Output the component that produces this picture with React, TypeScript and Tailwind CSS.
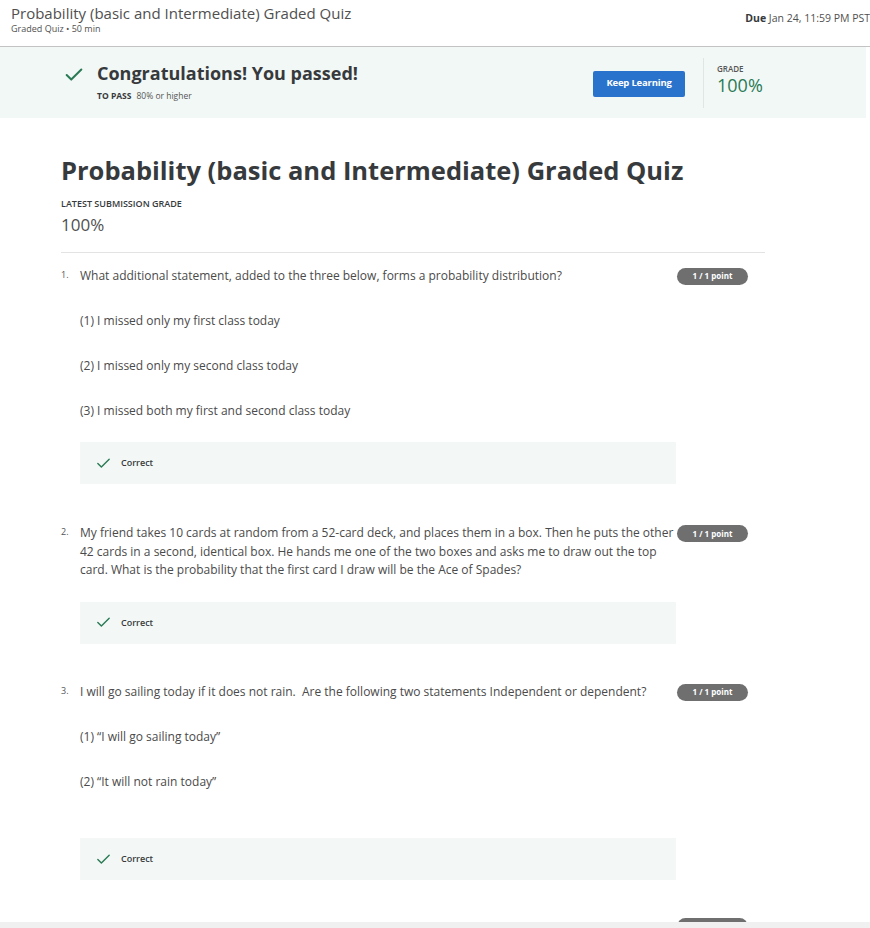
import { Check } from 'lucide-react';

const font = { fontFamily: '"Open Sans", "Liberation Sans", sans-serif' };

function Badge({ label = '1 / 1 point' }: { label?: string }) {
  return (
    <div className="flex h-[17px] w-[71px] shrink-0 items-center justify-center rounded-full bg-[#6f6f6f] text-[8px] font-bold text-white">
      {label}
    </div>
  );
}

function Correct() {
  return (
    <div className="flex h-[42px] w-[596px] items-center gap-[9px] bg-[#f3f8f6] pl-[15px]">
      <Check className="h-[17px] w-[17px] text-[#2a7a55]" strokeWidth={2} />
      <span className="text-[9px] font-semibold text-[#373a3c]">Correct</span>
    </div>
  );
}

function Question({ n, text, children }: { n: number; text: string; children?: React.ReactNode }) {
  return (
    <div className="flex">
      <div className="w-[19px] shrink-0 pt-[1px] text-[9px] text-[#555]">{n}.</div>
      <div className="w-[596px] shrink-0">
        <p className="whitespace-pre-wrap text-[12px] leading-[18.5px] text-[#4a4a4a]">{text}</p>
        {children}
      </div>
      <div className="ml-[1px] pt-[1px]">
        <Badge />
      </div>
    </div>
  );
}

function Option({ label }: { label: string }) {
  return <p className="mt-[26px] text-[12px] leading-[19px] text-[#4a4a4a]">{label}</p>;
}

export default function App() {
  return (
    <div className="relative h-[928px] w-[870px] overflow-hidden bg-white" style={font}>
      <header className="flex h-[47px] justify-between border-b border-[#c3c3c3]">
        <div className="pl-[11px] pt-[3px]">
          <h1 className="text-[15px] leading-[20px] text-[#505050]">Probability (basic and Intermediate) Graded Quiz</h1>
          <p className="text-[9px] leading-[12px] text-[#505050]">Graded Quiz • 50 min</p>
        </div>
        <div className="pt-[11px] text-[10.5px] text-[#505050]">
          <span className="font-bold text-[#373a3c]">Due</span> Jan 24, 11:59 PM PST
        </div>
      </header>

      <section className="flex h-[71px] w-[866px] items-center bg-[#f2f8f6]">
        <div className="flex flex-1 items-start pl-[63px]">
          <Check className="mt-[2px] h-[22px] w-[22px] text-[#2a7a55]" strokeWidth={2.2} />
          <div className="ml-[12px]">
            <h2 className="text-[18px] font-bold leading-[22px] text-[#373a3c]">Congratulations! You passed!</h2>
            <p className="mt-[6px] text-[8.5px] text-[#555]">
              <span className="mr-[5px] font-bold text-[#373a3c]">TO PASS</span>80% or higher
            </p>
          </div>
        </div>
        <button className="mr-[18px] mt-[2px] h-[26px] w-[92px] rounded-[2px] bg-[#2a73cc] text-[9.5px] font-bold tracking-[-0.2px] text-white">
          Keep Learning
        </button>
        <div className="h-[50px] w-px bg-[#e0e6e4]" />
        <div className="w-[162px] pb-[7px] pl-[13px]">
          <div className="text-[8px] font-semibold text-[#555]">GRADE</div>
          <div className="text-[18px] leading-[20px] text-[#2a7a55]">100%</div>
        </div>
      </section>

      <main className="w-[765px] pl-[61px]">
        <h1 className="mt-[35px] text-[25.5px] font-bold leading-[34px] text-[#373a3c]">
          Probability (basic and Intermediate) Graded Quiz
        </h1>
        <div className="mt-[10px] text-[9px] font-semibold text-[#373a3c]">LATEST SUBMISSION GRADE</div>
        <div className="mt-[2px] text-[17px] leading-[24px] text-[#505050]">100%</div>
        <div className="mt-[15px] h-px bg-[#e3e3e3]" />

        <div className="mt-[14px]">
          <Question n={1} text="What additional statement, added to the three below, forms a probability distribution?">
            <Option label="(1) I missed only my first class today" />
            <Option label="(2) I missed only my second class today" />
            <Option label="(3) I missed both my first and second class today" />
            <div className="mt-[22px]">
              <Correct />
            </div>
          </Question>
        </div>

        <div className="mt-[40px]">
          <Question
            n={2}
            text="My friend takes 10 cards at random from a 52-card deck, and places them in a box. Then he puts the other 42 cards in a second, identical box. He hands me one of the two boxes and asks me to draw out the top card. What is the probability that the first card I draw will be the Ace of Spades?"
          >
            <div className="mt-[22px]">
              <Correct />
            </div>
          </Question>
        </div>

        <div className="mt-[39px]">
          <Question n={3} text="I will go sailing today if it does not rain.  Are the following two statements Independent or dependent?">
            <Option label="(1) “I will go sailing today”" />
            <Option label="(2) “It will not rain today”" />
            <div className="mt-[47px]">
              <Correct />
            </div>
          </Question>
        </div>

        <div className="mt-[38px] flex">
          <div className="w-[615px]" />
          <div className="ml-[1px]">
            <Badge label="" />
          </div>
        </div>
      </main>

      <div className="absolute bottom-0 left-0 h-[6px] w-full bg-[#f0f0f0]" />
    </div>
  );
}
